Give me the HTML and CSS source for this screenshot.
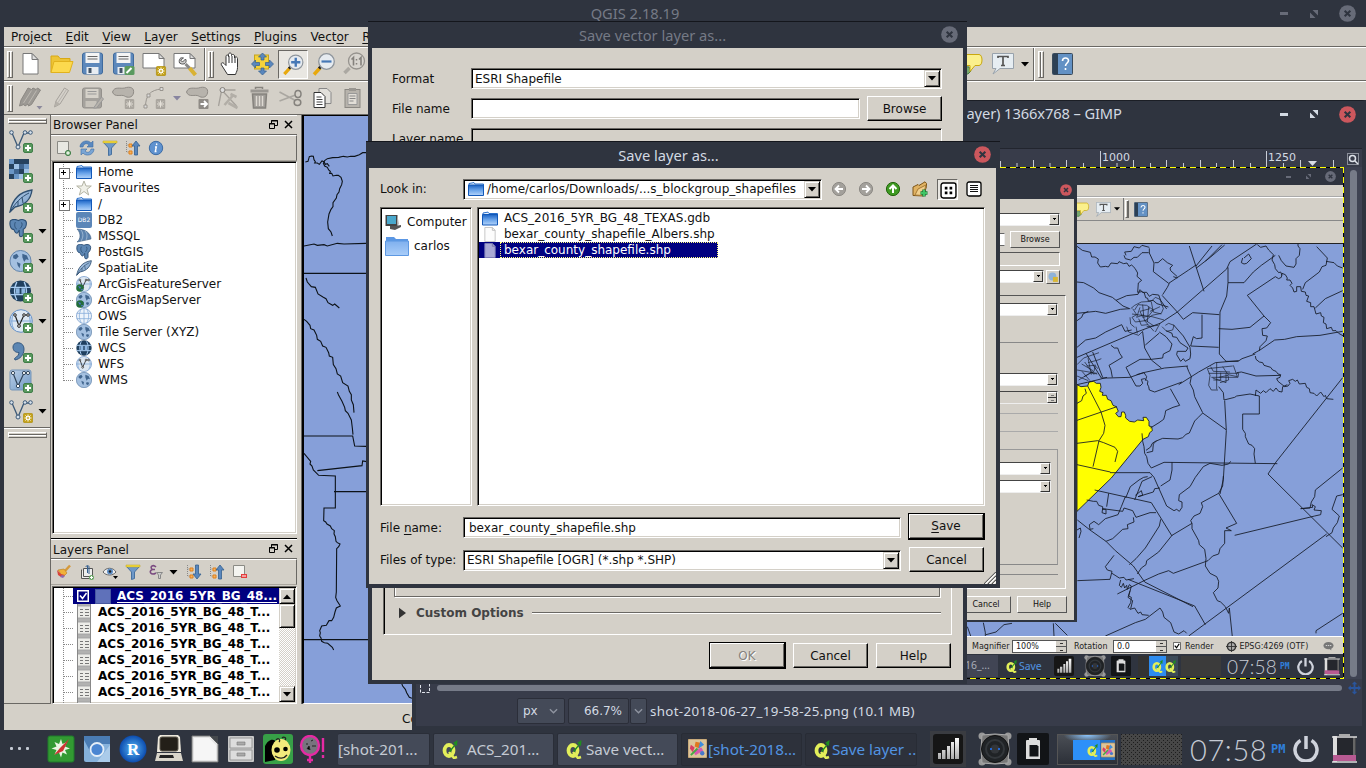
FILE: index.html
```html
<!DOCTYPE html>
<html lang="en">
<head>
<meta charset="utf-8">
<title>QGIS 2.18.19</title>
<link rel="stylesheet" href="styles.css">
</head>
<body>
<svg class="sprite" width="0" height="0">
<defs>
<linearGradient id="gFolder" x1="0" y1="0" x2="0" y2="1"><stop offset="0" stop-color="#1a62c4"/><stop offset=".5" stop-color="#6aa4ea"/><stop offset="1" stop-color="#b4d4fa"/></linearGradient>
<linearGradient id="gBlue" x1="0" y1="0" x2="1" y2="1"><stop offset="0" stop-color="#bcd0e8"/><stop offset="1" stop-color="#6d97c4"/></linearGradient>
<linearGradient id="gMetal" x1="0" y1="0" x2="0" y2="1"><stop offset="0" stop-color="#fff"/><stop offset="1" stop-color="#aaa"/></linearGradient>
<linearGradient id="gSide" x1="0" y1="0" x2="0" y2="1"><stop offset="0" stop-color="#7fb0ee"/><stop offset="1" stop-color="#a9cdf9"/></linearGradient>
<radialGradient id="gR"><stop offset="0" stop-color="#58b8f8"/><stop offset="1" stop-color="#0c4cae"/></radialGradient>
<pattern id="mesh" width="4" height="4" patternUnits="userSpaceOnUse"><rect width="4" height="4" fill="#474747"/><path d="M0 0h1v1h-1zM2 2h1v1h-1z" fill="#1d1d1d"/></pattern>
<symbol id="plus" viewBox="0 0 10 10"><rect x=".5" y=".5" width="9" height="9" rx="1.5" fill="#5a9a5f" stroke="#3f7d48"/><path d="M5 2v6M2 5h6" stroke="#fff" stroke-width="2"/></symbol>
<symbol id="sun" viewBox="0 0 10 10"><rect x=".3" y=".3" width="9.4" height="9.4" rx="1.5" fill="#c4a21a" stroke="#a88806" stroke-width=".6"/><path d="M5 1.5v7M1.5 5h7M2.5 2.5l5 5M7.500 2.500l-5 5" stroke="#fff"/><circle cx="5" cy="5" r="1.5" fill="#c4a21a" stroke="#fff"/></symbol>
<symbol id="new" viewBox="0 0 24 24"><path d="M4.500 1.500h9l6 6v14.500h-15z" fill="#fff" stroke="#777"/><path d="M13.500 1.500v6h6z" fill="#ddd" stroke="#777"/></symbol>
<symbol id="open" viewBox="0 0 24 24"><path d="M1.500 20.500v-16.500h7l2 2.500h10v4" fill="#edc436" stroke="#d8a814"/><path d="M1.500 20.500l3-11h19l-3.500 11z" fill="#fcd94e" stroke="#e1b21d"/></symbol>
<symbol id="save" viewBox="0 0 24 24"><rect x="2" y="1" width="20" height="21" rx="2" fill="#5d88bb" stroke="#3f6b9e"/><rect x="5" y="1" width="14" height="10" fill="#f4f4f4"/><path d="M7 4.500h10M7 7h10" stroke="#666"/><rect x="6" y="15" width="12" height="7" fill="#e8edf2"/><rect x="8" y="16" width="3" height="5" fill="#456"/></symbol>
<symbol id="savegrey" viewBox="0 0 24 24"><rect x="2" y="2" width="19" height="20" rx="2" fill="#a5a29d" stroke="#94918c"/><rect x="5" y="3" width="13" height="9" fill="#d6d2ca"/><path d="M7 5.500h9M7 8h9" stroke="#999"/><rect x="5" y="15" width="11" height="6" fill="#c8c4bc"/><path d="M13 22l8-11 2 2-7 9z" fill="#b7b3ac" stroke="#999"/></symbol>
<symbol id="saveas" viewBox="0 0 24 24"><use href="#save"/><rect x="13" y="14" width="10" height="9" rx="1.500" fill="#5a9a5f"/><path d="M15 21l5-5" stroke="#fff" stroke-width="2"/></symbol>
<symbol id="compnew" viewBox="0 0 24 24"><path d="M.5 1.500h16l5 5v9.500h-21z" fill="#fff" stroke="#777"/><path d="M16.500 1.500v5h5z" fill="#ddd" stroke="#777"/><use href="#sun" x="13" y="14" width="11" height="10"/></symbol>
<symbol id="compmgr" viewBox="0 0 24 24"><path d="M.5 1.500h16l5 5v9.500h-21z" fill="#fff" stroke="#777"/><path d="M16.500 1.500v5h5z" fill="#ddd" stroke="#777"/><path d="M12 12l4 4" stroke="#888" stroke-width="3"/><path d="M6 11c5 3 8-1 6-4l-3 3-2-2 3-2c-3-1-5 1-4 5z" fill="#ccc" stroke="#555"/><path d="M16 16l6 7" stroke="#d9b233" stroke-width="4"/></symbol>
<symbol id="hand" viewBox="0 0 24 24"><path d="M8 22.500l-6-9.500c-1-2 1-3 2.500-1.500l2 2v-9c0-2 2.500-2 2.500 0v-2c0-2 3-2 3 0v1c0-1.500 3-1.500 3 .5v2c0-1.500 3-1.500 3 .5v9c0 3-1 4-2 7z" fill="#fff" stroke="#333"/><path d="M9.500 4v7M12.500 4v7M15.500 5v6" stroke="#333"/></symbol>
<symbol id="pan" viewBox="0 0 24 24"><rect x="4" y="3" width="14" height="14" fill="#f4d23c" stroke="#c5a41c"/><path d="M12 1l4 4h-2.500v3h-3V5H8zM12 23l4-4h-2.500v-3h-3v3H8zM1 12l4-4v2.500h4v3H5V16zM23 12l-4-4v2.500h-4v3h4V16z" fill="#5a87bd" stroke="#34608f" stroke-width=".7"/></symbol>
<symbol id="lens" viewBox="0 0 24 24"><path d="M8.500 16l-6 6.500" stroke="#e8a90e" stroke-width="3.500"/><path d="M9.500 14.500l-2 2" stroke="#222" stroke-width="3"/><circle cx="15" cy="9.500" r="7.800" fill="#e6ebf0" stroke="#8e959c" stroke-width="1.300"/></symbol>
<symbol id="zin" viewBox="0 0 24 24"><use href="#lens"/><path d="M15 4.500v10M10 9.500h10" stroke="#4678b6" stroke-width="2.600"/></symbol>
<symbol id="zout" viewBox="0 0 24 24"><use href="#lens"/><path d="M10 9.500h10" stroke="#4678b6" stroke-width="2.200"/></symbol>
<symbol id="z11" viewBox="0 0 24 24"><path d="M7 16l-5 5" stroke="#aba8a2" stroke-width="3.500"/><circle cx="14" cy="9" r="8" fill="#d8d5cf" stroke="#96938e" stroke-width="1.300"/><path d="M9 7.500l2-2v8M16.500 7.500l2-2v8" fill="none" stroke="#84817c" stroke-width="1.600"/><path d="M14 7v1.500M14 11v1.500" stroke="#84817c" stroke-width="1.500"/></symbol>
<symbol id="pencil" viewBox="0 0 24 24"><path d="M5 21l1.500-6L15 2l4 2.500L10.500 18z" fill="#d4d0c9" stroke="#a5a19b"/><path d="M5 21l1.500-6 4 3z" fill="#b4b0a9"/><path d="M8.500 16.500l8.500-13" stroke="#b8b4ae"/></symbol>
<symbol id="pencils" viewBox="0 0 24 24"><path d="M1 20l1.500-6 7-12 3.500 1.500 1.500-1.500 3 1.500 1.500-1.500 3 2-9 14.500-3 1.500-.5-2-3 2-1-1.500z" fill="#9c9994" stroke="#8b8883"/><path d="M5 17l8-12.500M10 17.500l8-13" stroke="#bdb9b2"/><path d="M18 20h6l-3 3.500z" fill="#8d8a9c"/></symbol>
<symbol id="sung" viewBox="0 0 10 10"><rect width="10" height="10" rx="1.500" fill="#aaa69f"/><path d="M5 1.500v7M1.500 5h7M2.500 2.500l5 5M7.500 2.500l-5 5" stroke="#e4e0d8"/></symbol>
<symbol id="blob" viewBox="0 0 24 24"><path d="M1 6c2-6 8-3 12-4 6-2 10 0 9 5s-6 5-9 3-10 2-12-4z" fill="#b7b3ac" stroke="#8f8b86"/></symbol>
<symbol id="addblob" viewBox="0 0 24 24"><use href="#blob"/><use href="#sung" x="13" y="13" width="10" height="10"/></symbol>
<symbol id="mvblob" viewBox="0 0 24 24"><use href="#blob"/><rect x="13" y="13" width="10" height="10" rx="1" fill="#8f8b86"/><path d="M15 18h6M18.500 15l3 3-3 3" fill="none" stroke="#fff" stroke-width="1.800"/></symbol>
<symbol id="curve" viewBox="0 0 24 24"><path d="M3 21C3 9 8 4 19 3" fill="none" stroke="#99958f"/><path d="M1.500 19h3v3h-3zM4.500 8h3v3h-3zM17.500 1.500h3v3h-3z" fill="#ddd" stroke="#99958f"/><use href="#sung" x="13" y="13" width="10" height="10"/></symbol>
<symbol id="vertex" viewBox="0 0 24 24"><path d="M5 4h14M5 5L2 20M7 6l13 14" stroke="#a5a19b" stroke-width="1.300"/><circle cx="6" cy="4" r="2.500" fill="#ddd" stroke="#85817c"/><path d="M8 19l8-9M14 8l6 3M12 17l9 5" stroke="#b2aea7" stroke-width="2.600"/></symbol>
<symbol id="trash" viewBox="0 0 24 24"><path d="M8 3V1.500h7V3" fill="none" stroke="#88857f" stroke-width="1.500"/><path d="M3 3.500h18v3H3z" fill="#9a9792"/><path d="M5 8h14l-1 14H6z" fill="#a09d98" stroke="#85827d" stroke-width="1.500"/><path d="M9 10v10M12 10v10M15 10v10" stroke="#dedad3" stroke-width="1.500"/></symbol>
<symbol id="cut" viewBox="0 0 24 24"><path d="M1 6l15 8M1 15l16-6" stroke="#aaa7a1" stroke-width="1.600"/><ellipse cx="19.500" cy="8" rx="3" ry="3.500" fill="none" stroke="#85827d" stroke-width="1.500"/><ellipse cx="19" cy="16.500" rx="3.300" ry="3" fill="none" stroke="#85827d" stroke-width="1.500"/></symbol>
<symbol id="copy" viewBox="0 0 24 24"><path d="M9.500 2.500h8l4 4v11h-12z" fill="#e2e0db" stroke="#888"/><path d="M4.500 6.500h7l4 4v11h-11z" fill="#fff" stroke="#333"/><path d="M7 11h5M7 13.500h6M7 16h6M7 18.500h6" stroke="#444"/></symbol>
<symbol id="paste" viewBox="0 0 24 24"><rect x="4.500" y="3.500" width="15" height="18" fill="#b7b3ac" stroke="#8a8782"/><path d="M8.500 2h7v3h-7z" fill="#9a9792"/><path d="M7.500 7.500h9l0 11h-9z" fill="#e2ded7" stroke="#999"/><path d="M9 10h6M9 12.500h6M9 15h4" stroke="#888"/></symbol>
<symbol id="vee" viewBox="0 0 24 24"><path d="M3 4l6 14 6-14h6" fill="none" stroke="#3d5a78" stroke-width="1.300"/><g fill="#d8e2ec" stroke="#3d5a78"><circle cx="2.500" cy="3.500" r="1.800"/><circle cx="9" cy="18" r="2"/><circle cx="16" cy="3.500" r="1.800"/><circle cx="21.500" cy="3.500" r="1.800"/></g></symbol>
<symbol id="raster" viewBox="0 0 24 24"><path d="M0 0h20v20H0z" fill="#6a96c6"/><path d="M5 0h5v5H5zM15 0h5v5h-5zM0 5h5v5H0zM10 10h5v5h-5zM0 15h5v5H0zM10 0h5v5h-5z" fill="#26425f"/><path d="M5 5h5v5H5zM15 10h5v5h-5zM10 15h5v5h-5z" fill="#9fc2e6"/><path d="M5 10h5v5H5zM10 5h5v5h-5z" fill="#3f6590"/></symbol>
<symbol id="feather" viewBox="0 0 24 24"><path d="M1 23C3 12 9 3 23 1c-1 8-6 15-17 17z" fill="url(#gBlue)" stroke="#2f4f70" stroke-width="1.300"/><path d="M1 23C6 14 12 8 20 4M9 12l0 5M13 8l1 6" fill="none" stroke="#2f4f70"/></symbol>
<symbol id="eleph" viewBox="0 0 24 24"><path d="M2 2c4-3 8-1 10 0 3-2 10-2 10 3 0 4-2 7-4 8v7c-1 3-5 3-5 0v-6c-1 2-2 4-3 4-3 0-3-4-4-5-4 1-6-7-4-11z" fill="#5c86b3" stroke="#2c4f75" stroke-width="1.400"/><path d="M8 4c-2 4 0 8 2 9M15 4c3 2 1 6-1 8" fill="none" stroke="#2c4f75" stroke-width="1.200"/></symbol>
<symbol id="wms" viewBox="0 0 24 24"><circle cx="12" cy="12" r="11.500" fill="#a4c0e0" stroke="#5c7fa6"/><path d="M4 6l4-2 2 3-3 3-3-1zM8 13l4 2-1 5-2-3zM14 4l5 2 2 5-3-1-2 3-2-5zM16 15l4 1-2 4-3-2z" fill="#41658e"/></symbol>
<symbol id="wcs" viewBox="0 0 24 24"><circle cx="12" cy="12" r="11.500" fill="#20405f"/><path d="M8 2C5 8 5 16 8 22M16 2c3 6 3 14 0 20M1 8h22M1 16h22" fill="none" stroke="#a9cdf2" stroke-width="1.500"/><path d="M7 9h4v6H7zM13 9h4v6h-4z" fill="#8db6e0"/></symbol>
<symbol id="ows" viewBox="0 0 24 24"><circle cx="12" cy="12" r="11.300" fill="#eef4fb" stroke="#6590c6"/><path d="M8 1.500C4 8 4 16 8 22M16 1.500c4 6.500 4 14.500 0 21M1 8h22M1 16h22M12 1v22" fill="none" stroke="#87addb" stroke-width="1.200"/></symbol>
<symbol id="wfs" viewBox="0 0 24 24"><circle cx="12" cy="12" r="11.300" fill="#dde7f2" stroke="#6590c6"/><path d="M1 12h22M5 4c-3 5-3 12 0 16M19 4c3 5 3 12 0 16" fill="none" stroke="#87addb" stroke-width="1.200"/><path d="M6 6l4 11 5-11h4" fill="none" stroke="#222" stroke-width="1.200"/><g fill="#ddd" stroke="#333"><circle cx="6" cy="6" r="1.300"/><circle cx="10" cy="17" r="1.400"/><circle cx="15" cy="6" r="1.300"/><circle cx="19" cy="6" r="1.300"/></g></symbol>
<symbol id="comma" viewBox="0 0 24 24"><path d="M4 6c0-6 11-6 11 2 0 6-4 10-9 11l-.5-1.500c3-2 4.500-4 4.500-6-4 0-6-2-6-5.500z" fill="#5c86b3" stroke="#35587f"/></symbol>
<symbol id="virt" viewBox="0 0 24 24"><rect x="1" y="1" width="21" height="20" rx="2" fill="url(#gBlue)" stroke="#7796b8"/><path d="M4 4l5 13 6-13h4" fill="none" stroke="#33475c" stroke-width="1.200"/><g fill="#fff" stroke="#33475c"><circle cx="4" cy="4" r="1.600"/><circle cx="9" cy="17" r="1.700"/><circle cx="15" cy="4" r="1.600"/><circle cx="19" cy="4" r="1.600"/></g></symbol>
<symbol id="folder" viewBox="0 0 16 14"><path d="M1 3V1.500L6 .6l1 1.400h8.500V4" fill="#e8f2fd" stroke="#2a70cc"/><path d="M.5 3h15v10.500H.5z" fill="url(#gFolder)" stroke="#1258b8"/></symbol>
<symbol id="star" viewBox="0 0 16 16"><path d="M8 1l2 5h5.300l-4.300 3.300L12.700 15 8 11.500 3.300 15 5 9.300.7 6H6z" fill="#f0f0e8" stroke="#b4b4a4"/></symbol>
<symbol id="mssql" viewBox="0 0 16 16"><path d="M1 1c8 0 14 4 14 10L1 14c4-3 4-9 0-13z" fill="#5b82ae" stroke="#3c5c80" stroke-width=".6"/><path d="M5 2c3 4 2 8 0 11M9 3c3 3 2 7 1 9" fill="none" stroke="#c6d6e8" stroke-width=".6"/></symbol>
<symbol id="gbadge" viewBox="0 0 8 8"><circle cx="4" cy="4" r="3.800" fill="#226d3a"/><path d="M2 2l3 1-1 2zM5 5l2 0-1 2z" fill="#4d6fd0"/></symbol>
<symbol id="refresh" viewBox="0 0 16 16"><path d="M1 7C1 1 9-1 12 3l2-2v6H8l2-2C8 3 5 3 4 7z" fill="#5a89c0" stroke="#3d6ca5" stroke-width=".6"/><path d="M15 9c0 6-8 8-11 4l-2 2V9h6l-2 2c2 2 5 2 6-2z" fill="#7aa5d4" stroke="#3d6ca5" stroke-width=".6"/></symbol>
<symbol id="funnel" viewBox="0 0 16 16"><path d="M1.500 2.500h13L9.500 8v6.500l-3 1V8z" fill="#6e98c8" stroke="#47719f"/><path d="M1 1h14v2H1z" fill="#f4dc3e" stroke="#bfa31d" stroke-width=".5"/></symbol>
<symbol id="up" viewBox="0 0 16 16"><path d="M1.500 1v11h4M1.500 5h4" fill="none" stroke="#888" stroke-dasharray="1 1"/><path d="M4 4h3v3H4zM4 11h3v3H4z" fill="#f6b25e" stroke="#e0801a"/><path d="M11 1l4 5h-2.500v9h-3V6H7z" fill="#5a87bd" stroke="#34608f" stroke-width=".8"/></symbol>
<symbol id="down" viewBox="0 0 16 16"><path d="M1.500 1v11h4M1.500 5h4" fill="none" stroke="#888" stroke-dasharray="1 1"/><path d="M4 4h3v3H4zM4 11h3v3H4z" fill="#f6b25e" stroke="#e0801a"/><path d="M11 15l4-5h-2.500V1h-3v9H7z" fill="#5a87bd" stroke="#34608f" stroke-width=".8"/></symbol>
<symbol id="info" viewBox="0 0 16 16"><circle cx="8" cy="8" r="6.700" fill="#5f92cf" stroke="#3d6ca5"/><path d="M8.800 3.500l-.3 1.600M7 7h1.300l-1 4.500h1.200" stroke="#fff" stroke-width="1.400" fill="none"/></symbol>
<symbol id="addbox" viewBox="0 0 16 16"><path d="M1.500 1.500h11v12h-11z" fill="#e8e8e2" stroke="#8a8a84"/><circle cx="12" cy="13" r="2.600" fill="#8fbf8a" stroke="#3f7d48"/><path d="M12 11.500v3M10.500 13h3" stroke="#fff"/></symbol>
<symbol id="delbox" viewBox="0 0 16 16"><path d="M1.500 1.500h11v11h-11z" fill="#f4f4f0" stroke="#8a8a84"/><path d="M9 10h6v4H9z" fill="#e53c3c"/><path d="M10 12h4" stroke="#fff"/></symbol>
<symbol id="brush" viewBox="0 0 16 16"><path d="M9 7l5-5.500" stroke="#d59a3c" stroke-width="2.500"/><path d="M2 6l6-1 3 4-4 4z" fill="#f0b23a" stroke="#bb7a1b" stroke-width=".6"/><path d="M1 6l4 4 4 1-4 2-3-2z" fill="#d8443a"/><path d="M4 13l2-2 3 1-2 2z" fill="#8c6cb0"/></symbol>
<symbol id="grp" viewBox="0 0 16 16"><path d="M2.500 5.500v9h8M4.500 4.500v8h9v-8z" fill="#eee" stroke="#555"/><path d="M8.500 2v7M7 3c0-2 3-2 3 0v7" fill="none" stroke="#345f8f"/><circle cx="12.500" cy="13.500" r="2.500" fill="#6aa766"/><path d="M12.500 12v3M11 13.500h3" stroke="#fff"/></symbol>
<symbol id="eye" viewBox="0 0 16 16"><path d="M1 8c3-5 10-5 13 0-3 4-10 4-13 0z" fill="#eee" stroke="#666"/><circle cx="8" cy="7.500" r="3" fill="#5d8fc8"/><circle cx="8" cy="7.500" r="1.300" fill="#222"/><path d="M11 12h5l-2.500 3z" fill="#000"/></symbol>
<symbol id="eps" viewBox="0 0 16 16"><path d="M8 3C5 0 1 3 4.500 5.500 0 7 3 12 8 9M4 5.500h3" fill="none" stroke="#7a4a80" stroke-width="1.500"/><path d="M8.500 8.500h6l-2 2.500v3.500h-2V11z" fill="#ccc" stroke="#888"/></symbol>
<symbol id="table" viewBox="0 0 14 16"><path d="M.5 0h13v16H.5z" fill="#ecece8" stroke="#888"/><path d="M1 1.500h12M1 14.500h12" stroke="#aaa" stroke-width="2"/><path d="M3 5.500h3M8 5.500h4M3 8.500h3M8 8.500h4M3 11.500h3M8 11.500h4" stroke="#777"/></symbol>
<symbol id="float" viewBox="0 0 9 9"><path d="M2.500 3V.5h6v5H6M2 1h7M.5 3.500h5v5h-5zM0 4h6" fill="none" stroke="#000"/></symbol>
<symbol id="x" viewBox="0 0 9 9"><path d="M1 1l7 7M8 1L1 8" stroke="#000" stroke-width="1.500"/></symbol>
<symbol id="close" viewBox="0 0 18 18"><circle cx="9" cy="9" r="8.800" fill="#cc575d"/><path d="M6 6l6 6M12 6l-6 6" stroke="#2f343f" stroke-width="2.200"/></symbol>
<symbol id="closeoff" viewBox="0 0 18 18"><circle cx="9" cy="9" r="8.800" fill="#676b78"/><path d="M6 6l6 6M12 6l-6 6" stroke="#2f343f" stroke-width="2.200"/></symbol>
<symbol id="max" viewBox="0 0 8 8"><path d="M2.500 0H8v5.500zM0 2.500V8h5.500z"/></symbol>
<symbol id="tri" viewBox="0 0 8 5"><path d="M0 0h8L4 4.500z"/></symbol>
<symbol id="help" viewBox="0 0 21 22"><rect x=".5" y=".5" width="20" height="21" rx="1" fill="#6391c4" stroke="#3a4a5a"/><path d="M1 1h5v20H1z" fill="#2c4055"/><path d="M10.500 8c0-4 6-4 6-.5 0 2.500-3 2.500-3 5.500M13.500 15v2" fill="none" stroke="#fff" stroke-width="1.600"/></symbol>
<symbol id="tip" viewBox="0 0 26 22"><path d="M7 21c-3-5 0-8 5-7l2 4-3 3z" fill="#78a870" stroke="#447a44"/><path d="M3 1.500h19c4 0 4 11 0 11h-4l-5 6v-6H3z" fill="#fbf08c" stroke="#c9a70e"/></symbol>
<symbol id="ttip" viewBox="0 0 22 22"><path d="M.5.500h21v15H8L1 21l3-5.500H.500z" fill="#e6edf2" stroke="#98a2ac"/><path d="M6 5V3.500h10V5M11 3.500v9M9 12.500h4" fill="none" stroke="#555" stroke-width="1.700"/></symbol>
<symbol id="q" viewBox="0 0 16 20"><ellipse cx="7" cy="11.500" rx="4.500" ry="5.500" fill="none" stroke="#e2ef5a" stroke-width="3.800"/><path d="M7 13l5 6 3-1" stroke="#e2ef5a" stroke-width="2.600" fill="none"/><path d="M7 12l6-7-2-1 4.500-3-.5 6-1.500-1-5 7z" fill="#1f8f1f"/></symbol>
<symbol id="bars" viewBox="0 0 30 30"><rect width="30" height="30" rx="3" fill="#161616"/><path d="M5 19h3v6H5zM9 16h3.500v9H9zM14 12h3v13h-3zM18 8h3v17h-3zM22 4h4v21h-4z" fill="url(#gMetal)"/></symbol>
<symbol id="spk" viewBox="0 0 34 34"><g fill="#999"><circle cx="4" cy="4" r="3.500"/><circle cx="30" cy="4" r="3.500"/><circle cx="4" cy="30" r="3.500"/><circle cx="30" cy="30" r="3.500"/></g><path d="M4 3q13-2 26 0 2 14 0 28-13 2-26 0-2-14 0-28z" fill="#777" stroke="#aaa"/><circle cx="17" cy="17" r="13.500" fill="#202326" stroke="#111"/><circle cx="17" cy="17" r="9" fill="none" stroke="#33373b" stroke-width="2"/><circle cx="17" cy="17" r="4.500" fill="#33363a"/><path d="M12 17h2M20 17h2" stroke="#27f" stroke-width="1.500"/></symbol>
<symbol id="clip" viewBox="0 0 32 32"><rect width="32" height="32" rx="2" fill="#121417"/><path d="M9 8q0-1 1-1h2V5h8v2h2q1 0 1 1v18H9z" fill="#ddd"/><path d="M12.500 12h7.500l1.500 1.500v10h-9z" fill="#121417"/></symbol>
<symbol id="pow" viewBox="0 0 26 26"><path d="M7.500 4.500a11 11 0 1 0 11 0" fill="none" stroke="#cfd3dc" stroke-width="3.500"/><path d="M13 0v13" stroke="#cfd3dc" stroke-width="3.500"/></symbol>
<symbol id="bat" viewBox="0 0 27 30"><path d="M8 0h11v3H8z" fill="#aaa"/><rect x="2" y="2" width="23" height="26" rx="1" fill="#25272d"/><path d="M2 2h4v26H2z" fill="#ddd"/><path d="M2 21h23v6H2z" fill="#b85a92"/><path d="M22 3h2.500v18H22z" fill="#666"/><path d="M1 28h25M1 3h25" stroke="#ddd" stroke-width="1.600"/></symbol>
<symbol id="gimp" viewBox="0 0 20 20"><rect width="20" height="20" rx="1" fill="#dcc59a" stroke="#b08c58"/><path d="M8 3l5 1-1 6-5-2z" fill="#e07820"/><path d="M13 2l4 4-6 4z" fill="#3f8ede"/><path d="M3 6l4 3-2 5-3-4z" fill="#d83e64"/><path d="M5 13l9-4 2 3-8 5z" fill="#d958b0"/><circle cx="15" cy="15" r="2.300" fill="#4878cc"/><path d="M3 17l7-7" stroke="#4a4" stroke-width="2"/></symbol>
</defs>
</svg>

<main class="desktop">

<section class="win qgis">
 <header class="title dim"><span class="cap">QGIS 2.18.19</span><span class="wb"><i class="min"></i><svg class="mx"><use href="#max"/></svg><svg class="cl"><use href="#closeoff"/></svg></span></header>
 <nav class="menu"><span>Pro<u>j</u>ect</span><span><u>E</u>dit</span><span><u>V</u>iew</span><span><u>L</u>ayer</span><span><u>S</u>ettings</span><span><u>P</u>lugins</span><span>Vect<u>o</u>r</span><span><u>R</u>aster</span></nav>
 <div class="tb">
  <i class="grip"></i>
  <svg><use href="#new"/></svg><svg><use href="#open"/></svg><svg><use href="#save"/></svg><svg><use href="#saveas"/></svg><svg><use href="#compnew"/></svg><svg><use href="#compmgr"/></svg>
  <i class="sep"></i><i class="grip"></i>
  <svg><use href="#hand"/></svg><svg><use href="#pan"/></svg><svg class="on"><use href="#zin"/></svg><svg><use href="#zout"/></svg><svg><use href="#z11"/></svg>
  <span class="tbr"><svg class="tipi"><use href="#tip"/></svg><svg class="ttipi"><use href="#ttip"/></svg><svg class="ar"><use href="#tri"/></svg><i class="sep"></i><i class="grip"></i><svg class="helpi"><use href="#help"/></svg></span>
 </div>
 <div class="tb">
  <i class="grip"></i>
  <svg><use href="#pencils"/></svg><svg><use href="#pencil"/></svg><svg><use href="#savegrey"/></svg><svg><use href="#addblob"/></svg><svg><use href="#curve"/></svg><svg class="ar grey"><use href="#tri"/></svg><svg><use href="#mvblob"/></svg><svg><use href="#vertex"/></svg><svg><use href="#trash"/></svg><svg><use href="#cut"/></svg><svg><use href="#copy"/></svg><svg><use href="#paste"/></svg>
 </div>
 <div class="work">
  <aside class="ltb">
   <i class="hgrip"></i>
   <div class="li"><svg viewBox="0 0 24 24"><use href="#vee"/><use href="#plus" x="14" y="14" width="10" height="10"/></svg></div>
   <div class="li"><svg viewBox="0 0 24 24"><use href="#raster"/><use href="#plus" x="14" y="14" width="10" height="10"/></svg></div>
   <div class="li"><svg viewBox="0 0 24 24"><use href="#feather"/><use href="#plus" x="14" y="14" width="10" height="10"/></svg></div>
   <div class="li"><svg viewBox="0 0 24 24"><use href="#eleph" width="19" height="19"/><use href="#plus" x="14" y="14" width="10" height="10"/></svg><svg class="ar"><use href="#tri"/></svg></div>
   <div class="li"><svg viewBox="0 0 24 24"><use href="#wms" y="1" width="23" height="22"/><use href="#plus" x="14" y="14" width="10" height="10"/></svg><svg class="ar"><use href="#tri"/></svg></div>
   <div class="li"><svg viewBox="0 0 24 24"><use href="#wcs" y="1" width="23" height="22"/><use href="#plus" x="14" y="14" width="10" height="10"/></svg></div>
   <div class="li"><svg viewBox="0 0 24 24"><use href="#wfs"/><use href="#plus" x="14" y="14" width="10" height="10"/></svg><svg class="ar"><use href="#tri"/></svg></div>
   <div class="li"><svg viewBox="0 0 24 24"><use href="#comma" y="2"/><use href="#plus" x="14" y="14" width="10" height="10"/></svg></div>
   <div class="li"><svg viewBox="0 0 24 24"><use href="#virt"/><use href="#plus" x="14" y="14" width="10" height="10"/></svg></div>
   <div class="li"><svg viewBox="0 0 24 24"><use href="#vee"/><use href="#sun" x="14" y="14" width="10" height="10"/></svg><svg class="ar"><use href="#tri"/></svg></div>
   <i class="hline"></i><i class="hgrip"></i>
  </aside>
  <div class="docks">
   <section class="dock browser">
    <h2>Browser Panel<span><svg><use href="#float"/></svg><svg><use href="#x"/></svg></span></h2>
    <div class="dtb"><svg><use href="#addbox"/></svg><svg><use href="#refresh"/></svg><svg><use href="#funnel"/></svg><svg><use href="#up"/></svg><svg><use href="#info"/></svg></div>
    <ul class="tree sunk">
     <li class="ex"><svg><use href="#folder"/></svg>Home</li>
     <li><svg><use href="#star"/></svg>Favourites</li>
     <li class="ex"><svg><use href="#folder"/></svg>/</li>
     <li><span class="db2">DB2</span>DB2</li>
     <li><svg><use href="#mssql"/></svg>MSSQL</li>
     <li><svg><use href="#eleph"/></svg>PostGIS</li>
     <li><svg><use href="#feather"/></svg>SpatiaLite</li>
     <li><svg viewBox="0 0 16 16"><use href="#wfs"/><use href="#gbadge" y="8" width="8" height="8"/></svg>ArcGisFeatureServer</li>
     <li><svg viewBox="0 0 16 16"><use href="#wms"/><use href="#gbadge" y="8" width="8" height="8"/></svg>ArcGisMapServer</li>
     <li><svg><use href="#ows"/></svg>OWS</li>
     <li><svg><use href="#wms"/></svg>Tile Server (XYZ)</li>
     <li><svg><use href="#wcs"/></svg>WCS</li>
     <li><svg><use href="#wfs"/></svg>WFS</li>
     <li class="last"><svg><use href="#wms"/></svg>WMS</li>
    </ul>
   </section>
   <section class="dock layers">
    <h2>Layers Panel<span><svg><use href="#float"/></svg><svg><use href="#x"/></svg></span></h2>
    <div class="dtb"><svg><use href="#brush"/></svg><svg><use href="#grp"/></svg><svg><use href="#eye"/></svg><svg><use href="#funnel"/></svg><svg><use href="#eps"/></svg><svg class="ar"><use href="#tri"/></svg><svg><use href="#down"/></svg><svg><use href="#up"/></svg><svg><use href="#delbox"/></svg></div>
    <div class="ltree sunk">
     <ul class="tree bold">
      <li class="sel"><div><svg class="chk" viewBox="0 0 12 12"><path d="M.75.750h10.500v10.500H.750zM3 5.500l2.500 3L9.500 3" fill="none" stroke="#fff" stroke-width="1.500"/></svg><i class="sw"></i><u>ACS_2016_5YR_BG_48...</u></div></li>
      <li><svg class="t"><use href="#table"/></svg>ACS_2016_5YR_BG_48_T...</li>
      <li><svg class="t"><use href="#table"/></svg>ACS_2016_5YR_BG_48_T...</li>
      <li><svg class="t"><use href="#table"/></svg>ACS_2016_5YR_BG_48_T...</li>
      <li><svg class="t"><use href="#table"/></svg>ACS_2016_5YR_BG_48_T...</li>
      <li><svg class="t"><use href="#table"/></svg>ACS_2016_5YR_BG_48_T...</li>
      <li><svg class="t"><use href="#table"/></svg>ACS_2016_5YR_BG_48_T...</li>
      <li><svg class="t"><use href="#table"/></svg></li>
     </ul>
     <div class="sb"><b class="btn"><svg class="flip"><use href="#tri"/></svg></b><b class="btn thumb"></b><b class="btn end"><svg><use href="#tri"/></svg></b></div>
    </div>
   </section>
  </div>
  <div class="canvas">
   <svg viewBox="912 348 324 1764" width="108" height="588" fill="none" stroke="#0c1218" stroke-width="3.300">
    <path d="M916 486l8-2 4-14 6-2 6 1 2 10 4 6-2 4 8 0 6 4 8-10 6 2 4 8 6-2 6 8M1098 458l-10 0-10 6-14 5-12 0-10 2-12-2-14 3-18 1-16 3-8 6-4 8 4 8 8 4 4 8 5 4-2 6 6 0 4 8 10-2 6 0 8 6 4 12-2 10-6 12-2 10-6 8-2 10-10 14 0 12-6 8-6 14-4 24 2 20 8 10 4 12"/>
    <path d="M912 738l30-6 10 4 20-2 10 4 30-8 20 2 66-2M912 820h186M918 834l4 12 12 14 12 2 8 20 16 10 8 4 6 12 14 8 6-4 14 12M912 958l8 6 10 12 2 10 10 4 8 16 2 12 10 6 6 14 10 4 8 16 2 10 10 4 2 22 8 12 4 16 10 6 6 20 16 10 4 16 6 10 0 16 6 14 2 24M1012 1176l4 10 10 18 8 18 2 10 8 8 10 20 3 24 2 20M912 1308h146l6 30 34 1M912 1360l20 24-2 8 6 6 4 12 16 16 50 2v96h-34l-1 38 6 4 4 6 10 6 4 8 8 6-1 10 4 8 2 14 4 4 8 4-4 8-6 6-1 130-2 16 4 10 10 16-12 6-4 12-4 16-6 10-8 0-8 14-14 2-6 14 2 6-2 10 4 6 2 10 8 4 10 2 14 12 4 8M952 1412l134-15 2-14 12 2M1002 1475h98M912 1919h324M1204 2048l4 10 8 10 4 10 8 14 8 3"/>
   </svg>
  </div>
 </div>
 <footer class="qstat">Coordinate</footer>
</section>

<section class="win gimp">
 <header class="title gt"><span class="gcap">ayer) 1366x768 – GIMP</span><span class="wb"><i class="min"></i><svg class="mx"><use href="#max"/></svg><svg class="cl"><use href="#close"/></svg></span></header>
 <div class="grule"><svg width="384" height="18" viewBox="0 0 384 18"><path d="M140.500 2v16M306.500 2v16" stroke="#c8ccd6"/><path d="M40.500 12v6M57 14v4M73.500 11v7M90 14v4M106.500 11v7M123.500 14v4M157 14v4M173.500 11v7M190.500 14v4M206.500 11v7M223.500 14v4M240.500 11v7M256.500 14v4M273.500 11v7M290.500 14v4M323.500 14v4M340.500 11v7M373.500 11v7" stroke="#c8ccd6"/><path d="M348 12h9l-4.500 5z" fill="#d8dce4"/><text x="142" y="12">1000</text><text x="308" y="12">1250</text></svg><svg class="zq" viewBox="0 0 12 12"><rect x=".5" y=".5" width="11" height="11" fill="none" stroke="#dfe3ea" stroke-dasharray="1 1"/><circle cx="5.500" cy="5.500" r="3" fill="none" stroke="#dfe3ea" stroke-width="1.500"/><path d="M8 8l3 3" stroke="#dfe3ea" stroke-width="1.500"/></svg></div>
 <div class="gmain">
  <div class="shot">
   <div class="s-title"><i class="min"></i><svg class="mx"><use href="#max"/></svg><svg class="cl"><use href="#closeoff"/></svg></div>
   <div class="s-menu"></div>
   <div class="s-tb"><svg class="a"><use href="#tip"/></svg><svg class="b"><use href="#ttip"/></svg><svg class="c"><use href="#tri"/></svg><i class="sep"></i><i class="grip"></i><svg class="d"><use href="#help"/></svg></div>
   <div class="s-gap"></div>
   <svg class="s-map" viewBox="0 42 1149 1176" width="383" height="392" fill="none" stroke="#151b26" stroke-width="2.600">
    <path d="M351 464l12 6 20-2 4-12 14-2 8 6 12 0 2 12-4 12 10 4-2 8 12 0 4 12 10 4 6 14 10 4 6 14-8 6 8 10 8 0 2-14 8 0 4 10 0 8 12 10 14 2 10-6 18 2-2-10 10 0 8 12 0 14 8 2 2 12-8 6-4 12-16 8-95 116L351 844z" fill="#ff0"/>
    <path d="M383 468l40 78 12 40-4 24-14 22-18 78M351 571l120-41M351 640l62-8 18 6 34 14 8 12-8 32M351 704l100 22M351 520l14-8 4-14 10-8-4-14"/>
    <path d="M351 49l16 12 24 6 4 14 10 0 10 6-2 12 8 12 16-2 8 2 8-12 20 2 4-6 14 6 10-2 6 10 8-4 10 10 8 14-2 10 14 12-10 8-2 28 12-2 8 4 4 14 6 2 2 8 14-2 12 10 20 6 14 4M498 76l-4-10 20-2 8-14 16 4 8-8 22 6M492 76l4 10 16 4 10-8 10 0 14-14 20 0M568 55l0 14 14 30-2 26 46 35 60-40 22-15M640 140l12 4M628 160l-6 12-14 22M584 98l10 0 14-12 14 12 16 8-8 8 2 8 20 18M688 48l44 136M652 246l148-129 10-22 80-53M804 112l0 46-4 40-20 48-2 126 20 22M708 115l44-34 42-36M736 94l50-50M708 108l48-60M606 196l46 50 18 22 28-20 80 6M726 254v70l-16 2-10-6-8 28 84 4M652 246l-52 34-80 30-169 72M351 352l26-22 30-6 30-18 48-22 10 20 20-4M351 156l20 2 30 16 16 14 40 14 32 26 20 8-28 2-44 12-30-6-56 6M351 272l14-10 4-10 16-8M468 211l32-14 34-4 6-14 8 8 12 0 8 12 10-6 18 2 6 16 18 26M548 306l6 48 20 36 30 24M556 345l42-36M640 284l30 34 20 34 2 20-2 14-14 8-6-8-8 8-12-20 2-10 26 0 6-10-24-16-10-16-12-2-2-10-18-8M574 388l34-4 2-12 20-10 6-20-18-22-20-14M453 346l10 8 10 0 6 16 8 12-40 24 6 14 4 22M378 370l46 74 20 0 66-2 40-14 64-14 70-6M398 366l30 76M574 388l-34 0-42 24 10 20 20 36 12 0 8-8-4-12 10-2 10 8-2 8 4 8 2 10 16 6 82-30M556 452l4-12-8-12-22 6M351 464l60-14 30-8M680 408l6 16 8 16-4 20 10 20 4 20 24 48M656 464l60-38 50-28 70-6M631 476l28 50-20 6-22 10-2 12-4 14-14 10-26 16M728 549l-14 14-10 10-16 36-10 4-10 10-14 4-46-2-24 10-8 6-4 10-14 10M728 549l70 50M796 394h38l12-8 40-14M830 428l14-2 44 12 74-2M830 498l-6 4-32 8-2-22-14-18M830 498l40-6 28 6v54h-50v46l8 12 0 10 10 22 10 4 8 10-2 16 4 28M794 512l5 90-9 146-10 44M546 610l2 24 4 16 2 20 6 10 4 20 10 14 38-17 340 4M560 668l18-4 2-22 10-10M776 296l40 2 54-6 42-34M804 158h48l28-32 24-20 42-30M892 44l10 8 16-4 8 12 14 14-4 16 8 14 2 12 10 12 6-2 4 10M848 84l-4 14 8 4 8-2 14-14-8-14-14 12M946 140l-84 56 50 62 20 20-12 16-14 2 2 20 14 2-4 14-18 18-2 12M878 372l22-12 44-30 30-2 36-8 70-4 68-12M956 76l8 16 14 16 24 4 6-10 0-16 10-10 2-20-6-8 0-6M1070 50l32 34-4 22-12 4-8 16-42 32-8 20M1098 94l24 4 10 10 16 6M1066 234l30-28 52-24"/>
    <path d="M946 140l10 6 8-4 2-12 10 4 6 10-2 6 10 0 6 10-6 6 8 8 4 12 8-2 0-14 12 0 2 14 12 2 2 10 8 2-6 16 12 4 0 12 10 0 6 22 14-4 2 10 8 4-2 16 8 4 2 14 14-4 4 10 10 0 8 8 18 10 4 16 2 12M886 378l2 10 10 8 10 2 4 8 20 6 6 8 10 4 6 8 8 2-2 8-10 4 4 8 20 16 10-2 6-8-4-8 12-4 8 6 6-4 6 12 18-2 4 12 8 4 2 12 12 2 8 8 12-12 10 14 4-4 4 10 20 2M982 464l-14 6-2 16-10-2-8-10-8 10-10-8-12 12-8-6-8 8-14-10-2 18"/>
    <path d="M1148 443l-200 253-24 36 224 222M1148 714l-82 66-2 20-10 16-4 18-28 2 36-4-2-8 10 6-4 10 22 2-2 12-18 4-240 58M1148 794l-18 4-14 40 22 20-6 20-12 16-4 14-18 12M1100 912L686 1218M736 1184l-32-56-200-80M790 738l-2 30-12 22 54 90-32 14 16 8-20 0 0 38-14 16-4 16-18 6-14 14-104 38-14-8-30 10-44 20-80 40M776 790l-52 28 4 12-8 20-18 8-10 14 4 8 0 16 20 36 2 12 16 14 4 28-2 22 14 22 20 10 6 14-2 20-14 14 12 24 10 4 14 14 10 20 2-16 10 96M696 880l-60 36-40 50-36 26-2 12-14 10-12 18M602 868l-4 20-42 66-28 32-20 18M352 870l38 30 48 34 28 28 54 46 34 48 145 74M462 976l-26 34 6 10 14 4-6 24-98 4M456 1030l22 14 14-2 6 8 24-4M482 1050l-4 16 6 6 6-12 4 14 6-8 2 12 6-14 6 4-4 16-4 14 8 4-2 16-8 14 6 6 14-4 10 16 8-4 4 8 20 2M510 1082l-6 20 14 10-6 24M436 1218l90-40 30-10 44-34 8 12 4 16 20 16 10 28 14 6 16-10 8 8M438 934l20-8 30-28 16-2-2-12 20-8-2-14M404 780l170 38 62 100M380 810l20 4 10 0 6 12 12 4 0 8 10 0 0 14-12-4 2-12 60 8 4-10 26 8 10 20 42-14 18 0M496 800l-12 30-10 24-38 12-20 18-14-10-14 10 2 14 10-2M446 790l-6 40M450 728l120 0 12 14 38 86 22 14 8-4 8 6 8-12 0-16-10-4 2-18 32-24 16-28 24-32 20-10 36 6 20-4 6-8M497 804l14-34 26-20 14-8 12-2M524 810l22-56 30-14M526 796l18-14 4 14-14 4 46-14 4-10 16-2M602 768l28-18 6-30 0-24M351 900l10-6 2 10-6 20M1068 1210l0-8 80-52M22 1190l10 28M70 1178l6 30 0 10M78 1214l30-8 24-22 24-4M280 1180l2 38M286 1180l36 36"/>
    <path stroke-width="2" d="M524 240l10-16 26 2 20 14-14 18-18 4-8-18 30-8M548 224l4 44 30 20M516 252l60 8 36 10M566 230l-4 46M600 280l-14 26M536 266l8 20 20-2M512 236l12-10 20-10 30-2 12-12 14 6 10 28-6 14-28 6-20 16-30 4-10-14 14-8-12-18M510 262l2 20 12 10M500 290l6 16 30 10 14-14M528 290l4 20M552 270l30 34M560 290l34-4M574 216l6 30 24 6M570 244l30-14M606 290l14 14 18-4 4-14-16-6-10 6M540 232l-10 30 22-8M742 416l76-8M746 430l90 0-2 12-80 0M770 398v80M782 428l0 22-22 0M798 430v28l-40-14M742 416l8 20-4 30 8 14 20 0M776 442l28-6 2 14-26 8M788 410l16 24 28 6-12-34M752 410l8 14 50 2M365 402l34 20M372 440l30-16 4-20M351 420l60 10M384 384l10 50M351 404l20-20 46-16M356 450l36-22 20 4M374 396l28 38M366 424l24 28M351 438l34 14M380 408l24-2 10 10M384 398l30-8 10-4"/>
   </svg>
   <div class="s-stat"><span class="mg">Magnifier</span><span class="sp w1">100%<i></i></span><span class="rt">Rotation</span><span class="sp w2">0.0<i></i></span><svg class="ck" viewBox="0 0 9 9"><path d="M.5.500h8v8h-8z" fill="#fff" stroke="#555"/><path d="M2 4l2 2.500L7 2" fill="none" stroke="#000" stroke-width="1.400"/></svg><span>Render</span><svg class="gl" viewBox="0 0 12 12"><circle cx="6" cy="6" r="4.500" fill="#aaa" stroke="#333" stroke-width="1.600"/><path d="M6 0v12M0 6h12" stroke="#333"/></svg><span class="ep">EPSG:4269 (OTF)</span><svg class="bb" viewBox="0 0 12 10"><ellipse cx="6" cy="4.500" rx="5.500" ry="4" fill="#777"/><path d="M3 4.500h1.500M5.300 4.500h1.500M7.600 4.500h1.500" stroke="#ddd"/><path d="M7 8l2 2V7z" fill="#777"/></svg></div>
   <div class="s-task"><span class="s-t1">16_...</span><svg class="k1"><use href="#q"/></svg><span class="s-t2">Save</span><svg class="k2"><use href="#bars"/></svg><svg class="k3"><use href="#spk"/></svg><svg class="k4"><use href="#clip"/></svg><span class="pg"><svg><use href="#q"/></svg><svg><use href="#q"/></svg></span><span class="pg2"></span><span class="s-clk">07:58</span><b>PM</b><svg class="k5"><use href="#pow"/></svg><svg class="k6"><use href="#bat"/></svg></div>
   <div class="s-dlg">
    <div class="s-dt"><svg><use href="#close"/></svg></div>
    <div class="s-db">
     <div class="r cb r1"><i></i></div>
     <div class="r r2"><span class="le"></span><span class="bt">Browse</span></div>
     <div class="r fr r3"></div>
     <div class="r4"><div class="cb"><i></i></div><span class="bt"><svg viewBox="0 0 10 10"><circle cx="4.500" cy="4.500" r="4" fill="#8fb2d8"/><path d="M5 5h5v5H5z" fill="#d8b634"/></svg></span></div>
     <div class="s-grp">
      <div class="cb g1"><i></i></div><div class="ln g2"></div><div class="cb g3"><i></i></div><div class="cb off g4"><i></i></div><div class="ln g5"></div><div class="ln g6"></div>
      <div class="s-in"><div class="cb"><i></i></div><div class="cb"><i></i></div></div>
      <div class="ln g7"></div>
     </div>
     <div class="s-btns"><span class="bt">Cancel</span><span class="bt">Help</span></div>
    </div>
   </div>
  </div>
  <div class="vs"><i></i></div>
 </div>
 <div class="ghs"><svg class="qm" viewBox="0 0 10 10"><rect x=".5" y=".5" width="9" height="9" fill="none" stroke="#dfe3ea" stroke-dasharray="3 1.500"/></svg><i></i><svg class="nav" viewBox="0 0 14 14"><path d="M7 0l3 3H8v3h3V4l3 3-3 3V8H8v3h2l-3 3-3-3h2V8H3v2L0 7l3-3v2h3V3H4z" fill="#2a559c"/></svg></div>
 <footer class="gstat"><span class="gb u">px<svg viewBox="0 0 10 6"><path d="M1 1l4 4 4-4" fill="none" stroke="#8f94a0" stroke-width="1.500"/></svg></span><span class="gb z">66.7%</span><span class="gb v"><svg viewBox="0 0 10 6"><path d="M1 1l4 4 4-4" fill="none" stroke="#8f94a0" stroke-width="1.500"/></svg></span><span class="fn">shot-2018-06-27_19-58-25.png (10.1 MB)</span></footer>
</section>

<section class="win dlg vec">
 <header class="title dim"><span class="cap">Save vector layer as...</span><svg class="cl"><use href="#closeoff"/></svg></header>
 <div class="body">
  <div class="row f1"><label>Format</label><div class="combo sunk">ESRI Shapefile<b class="btn"><svg><use href="#tri"/></svg></b></div></div>
  <div class="row f2"><label>File name</label><div class="edit sunk"></div><button>Browse</button></div>
  <div class="row f3"><label>Layer name</label><div class="edit off sunk"></div></div>
  <div class="scroll"><div class="inner"></div><div class="cust"><svg viewBox="0 0 8 12"><path d="M0 0l8 6-8 6z" fill="#333"/></svg><b>Custom Options</b><i></i></div></div>
  <div class="btns"><button class="def gray">OK</button><button>Cancel</button><button>Help</button></div>
 </div>
</section>

<section class="win dlg lay">
 <header class="title"><span class="cap">Save layer as...</span><svg class="cl"><use href="#close"/></svg></header>
 <div class="body">
  <div class="row l1"><label>Look in:</label><div class="combo sunk"><svg class="fo"><use href="#folder"/></svg>/home/carlos/Downloads/...s_blockgroup_shapefiles<b class="btn"><svg><use href="#tri"/></svg></b></div>
   <svg class="n a" viewBox="0 0 16 16"><circle cx="8" cy="8" r="6.600" fill="#a3a09b" stroke="#8c8984"/><path d="M12 8H5M8 4.500L4.500 8 8 11.500" fill="none" stroke="#fff" stroke-width="1.800"/></svg>
   <svg class="n" viewBox="0 0 16 16"><circle cx="8" cy="8" r="6.600" fill="#a3a09b" stroke="#8c8984"/><path d="M4 8h7M8 4.500L11.500 8 8 11.500" fill="none" stroke="#fff" stroke-width="1.800"/></svg>
   <svg class="n" viewBox="0 0 16 16"><circle cx="8" cy="8" r="6.600" fill="#3f9a22" stroke="#22630d"/><path d="M8 12V5M4.500 8L8 4.500 11.500 8" fill="none" stroke="#fff" stroke-width="2"/></svg>
   <svg class="n" viewBox="0 0 16 16"><path d="M1 14.500V6l5-2.500 1 1L13 .8l1.500 1.700v3l-3 9.500z" fill="#e0b263" stroke="#7d5518"/><path d="M3 14l3-6 8-4-3 10.500z" fill="#f0cf8e" stroke="#a67a35"/><path d="M12 8.500v7M8.500 12h7" stroke="#1c7a36" stroke-width="3.400"/><path d="M12 9v6M9 12h6" stroke="#3fc466" stroke-width="2"/></svg>
   <span class="tog"><svg viewBox="0 0 16 16"><rect x="1" y="1" width="14" height="14" rx="2" fill="#fff" stroke="#000" stroke-width="1.300"/><path d="M4.500 4.500h2.500v2.500H4.500zM9 4.500h2.500v2.500H9zM4.500 9h2.500v2.500H4.500zM9 9h2.500v2.500H9z" fill="#000"/></svg></span>
   <svg class="n z" viewBox="0 0 16 16"><rect x="1" y="1" width="14" height="14" rx="2" fill="#fff" stroke="#000" stroke-width="1.300"/><path d="M4 4.500h8M4 6.500h8M4 8.500h8M4 10.500h8" stroke="#111"/></svg>
  </div>
  <div class="panes">
   <div class="side sunk">
    <div><svg viewBox="0 0 16 16"><path d="M.5 1h12v11H.5z" fill="#444"/><path d="M2 2h9v8H2z" fill="#4aa8cc"/><path d="M5 12h5l6-1v2l-6 3-5-1z" fill="#555"/><path d="M12.500 1.500l1.500 9-1.500 0z" fill="#bbb"/></svg>Computer</div>
    <div class="home"><svg viewBox="0 0 24 20"><path d="M1 4V1h8l2 2h12v3H1z" fill="#5b97e4"/><path d="M.5 5h23v14.500H.5z" fill="url(#gSide)" stroke="#5d98e2"/></svg>carlos</div>
   </div>
   <div class="list sunk">
    <div><svg><use href="#folder"/></svg>ACS_2016_5YR_BG_48_TEXAS.gdb</div>
    <div><svg viewBox="0 0 16 16"><path d="M2.500.500h8l3 3v12h-11z" fill="#fcfcfc" stroke="#c4c4c4"/><path d="M10.500.500v3h3" fill="none" stroke="#bbb"/></svg>bexar_county_shapefile_Albers.shp</div>
    <div class="s"><svg viewBox="0 0 16 16"><path d="M2.500.500h8l3 3v12h-11z" fill="#a9a9d4" stroke="#8080b8"/><path d="M10.500.500v3h3" fill="none" stroke="#77a"/></svg><span>bexar_county_shapefile.shp</span></div>
   </div>
  </div>
  <div class="row l3"><label>File <u>n</u>ame:</label><div class="edit sunk">bexar_county_shapefile.shp</div><button class="def"><span><u>S</u>ave</span></button></div>
  <div class="row l4"><label>Files of type:</label><div class="combo sunk">ESRI Shapefile [OGR] (*.shp *.SHP)<b class="btn"><svg><use href="#tri"/></svg></b></div><button>Cancel</button></div>
  <svg class="sg" viewBox="0 0 12 12" stroke-width="1.200"><path d="M0 12L12 0M4 12l8-8M8 12l4-4" stroke="#555"/><path d="M1.500 12L12 1.500M5.500 12L12 5.500M9.500 12L12 9.500" stroke="#fff"/></svg>
 </div>
</section>

<footer class="task">
 <span class="dots"><i></i><i></i><i></i></span>
 <div class="launch">
  <svg viewBox="0 0 28 28"><rect x="1" y="1" width="26" height="26" rx="2" fill="#329a32" stroke="#1f7a2a"/><path d="M14 4l1.500 5 4.500-2-2 4.500 5 2-5 1.500 2 4.500-4.500-2-1.500 5-2-5-4.500 2 2-4.500-5-1.500 5-2-2-4.500 4.500 2z" fill="#e9f6e2"/><path d="M7 20l6-7 9-9-6 12z" fill="#cc3434"/></svg>
  <svg viewBox="0 0 28 28"><rect x="1" y="1" width="26" height="26" rx="2" fill="#86b2dc"/><path d="M1 1h26v8H14l-6 9L1 5z" fill="#4a7cb4"/><path d="M14 27l7-9 6-8v17z" fill="#aacbea"/><circle cx="14" cy="14.500" r="6.500" fill="#4a86d2" stroke="#e4eef8" stroke-width="1.800"/></svg>
  <svg viewBox="0 0 28 28"><circle cx="14" cy="14" r="13.500" fill="url(#gR)"/><text x="8" y="20" class="rr">R</text></svg>
  <svg viewBox="0 0 28 28"><path d="M3 2l2-2h18l2 2 1 15H2z" fill="#eee9dc"/><rect x="5" y="2" width="18" height="14" rx="2" fill="#231f18" stroke="#5a564c"/><path d="M2 18h24l2 8H0z" fill="#d9d5ca"/><path d="M5 20h13l1 3H4z" fill="#222"/></svg>
  <svg viewBox="0 0 28 28"><path d="M1 1h18l8 8v18H1z" fill="#e4e4e4" stroke="#777"/><path d="M19 1h8v8z" fill="#44484c"/><path d="M3 3h15l7 7v15H3z" fill="#f6f6f6"/></svg>
  <svg viewBox="0 0 28 28"><rect x="1" y="1" width="26" height="26" rx="1" fill="#c8c8c8"/><path d="M3 3h22v10H3zM3 15h22v10H3z" fill="#ddd" stroke="#999"/><path d="M10 7h8v3h-8zM10 18h8v3h-8z" fill="#aaa" stroke="#777" stroke-width=".6"/></svg>
  <svg class="wide" viewBox="0 0 30 30"><rect width="30" height="30" rx="3" fill="#37a047"/><path d="M2 28V12C5 5 12 3 14 10l-2 16z" fill="#000"/><ellipse cx="18" cy="16" rx="9.500" ry="11" fill="#f3ea7c"/><circle cx="14" cy="16" r="2.800" fill="#000"/><circle cx="22.500" cy="15" r="2.300" fill="#000"/><path d="M12 22c4 3 9 3 12-1M13 6c2-3 5 0 3 2M19 4c2-2 5 0 3 2" fill="none" stroke="#222" stroke-width="1.300"/></svg>
  <svg viewBox="0 0 28 28"><ellipse cx="11" cy="10.500" rx="9" ry="9.500" fill="#77747e" stroke="#e62aa4" stroke-width="2.400"/><path d="M11 20v8M8 25h6M24 3v14M24 20v3" stroke="#e62aa4" stroke-width="2.400"/><path d="M7 9h2M12 6l2-1M8 14l2-3 1 4M13 11h4" stroke="#222"/></svg>
 </div>
 <div class="tasks"><span class="t1">[shot-201...</span><span class="t2"><svg><use href="#q"/></svg>ACS_201...</span><span class="t3"><svg><use href="#q"/></svg>Save vect...</span><span class="t4 act"><svg><use href="#gimp"/></svg>[shot-2018...</span><span class="t5 act"><svg><use href="#q"/></svg>Save layer ..</span></div>
 <div class="tray"><span class="br"><svg><use href="#bars"/></svg></span><svg class="sk"><use href="#spk"/></svg><svg class="cp"><use href="#clip"/></svg><span class="pager"><span><svg class="qq"><use href="#q"/></svg><svg class="gg"><use href="#gimp"/></svg></span></span><svg class="pager2"><rect width="61" height="31" fill="url(#mesh)"/></svg><span class="clk">07:58</span><b>PM</b><svg class="pw"><use href="#pow"/></svg><svg class="bt2"><use href="#bat"/></svg></div>
</footer>
</main>
</body>
</html>
```
FILE: styles.css
```css
* { box-sizing: border-box; }
body { margin: 0; background: #2f343f; overflow: hidden; }
.sprite { position: absolute; }
svg { display: block; flex: none; }
i { font-style: normal; flex: none; }
u { text-underline-offset: 2px; text-decoration-thickness: 1px; }
ul { list-style: none; margin: 0; padding: 0; }
.desktop { position: relative; width: 1366px; height: 768px; overflow: hidden; font: 12px "DejaVu Sans", sans-serif; color: #111; background: #000; white-space: nowrap; }
.win { position: absolute; overflow: hidden; }

.sunk { background: #fff; border: 1px solid; border-color: #6a6864 #fff #fff #6a6864; box-shadow: inset 1px 1px #000, inset -1px -1px #d4d0c8; }
.btn { background: #d4d0c8; border: 1px solid; border-color: #d4d0c8 #000 #000 #d4d0c8; box-shadow: inset 1px 1px #fff, inset -1px -1px #6a6864; display: flex; align-items: center; justify-content: center; flex: none; }
.btn svg { width: 8px; height: 5px; }
button { font: inherit; color: #111; background: #d4d0c8; border: 1px solid; border-color: #fff #000 #000 #fff; box-shadow: inset -1px -1px #6a6864; padding: 0; width: 75px; height: 25px; border-radius: 0; flex: none; }
button.def { width: 77px; height: 27px; border: 2px solid #000; border-width: 1px 2px 2px 1px; box-shadow: inset 1px 1px #fff, inset -1px -1px #6a6864; }
button.gray { color: #85827d; text-shadow: 1px 1px #fff; padding-top: 1px; }

.title { height: 27px; background: #2f343f; color: #d3dae3; display: flex; align-items: center; font: 14.67px "Noto Sans", sans-serif; position: relative; flex: none; }
.title.dim { color: #757a86; }
.cap { flex: 1; text-align: center; padding-bottom: 1px; }
.title .cl { width: 17px; height: 17px; }
.wb { display: flex; align-items: center; margin-right: 10px; }
.min { width: 8px; height: 3px; background: #d3dae3; }
.mx { width: 8px; height: 8px; margin: 0 21px 0 22px; fill: #d3dae3; }
.dim .min { background: #676b78; }
.dim .mx { fill: #676b78; }

/* main window */
.qgis { left: 0; top: 0; width: 1366px; height: 730px; padding-left: 4px; background: #d4d0c8; box-shadow: inset 4px 0 #2f343f; }
.qgis .title { margin-left: -4px; }
.qgis .cap { margin-right: 10px; }
.menu { height: 20px; padding-left: 7px; display: flex; gap: 13.5px; align-items: center; border-bottom: 1px solid #6a6864; }
.tb { height: 34px; border-top: 1px solid #fff; border-bottom: 1px solid #6a6864; display: flex; align-items: center; padding-left: 3px; }
.tb > svg { width: 31px; height: 24px; }
.tb > .grip + svg { margin-left: 2px; }
.tb > svg.on { width: 30px; height: 29px; padding: 2px 3px; border: 1px solid; border-color: #6a6864 #fff #fff #6a6864; background: #e9e7e2; }
.grip { width: 6px; height: 27px; border: 1px solid; border-color: #fff #6a6864 #6a6864 #fff; background: linear-gradient(90deg, #d4d0c8 1px, #6a6864 1px 2px, #fff 2px 3px, #d4d0c8 3px); }
.tb .sep { width: 2px; height: 33px; background: linear-gradient(90deg, #6a6864 50%, #fff 50%); margin: 0 2px 0 3px; }
.tb svg.ar, .ar { width: 10px; height: 5px; }
.tb > svg.ar { margin: 0 0 0 2px; }
.ar.grey { fill: #8885a0; }
.tbr { display: flex; align-items: center; margin-left: auto; margin-right: 293px; }
.tipi { width: 26px; height: 22px; }
.ttipi { width: 22px; height: 22px; margin: 0 6px 0 9px; }
.tbr .sep { margin: 0 3px 0 3px; }
.helpi { width: 21px; height: 22px; margin-left: 8px; }
.work { display: flex; height: 589px; }
.ltb { width: 47px; border-right: 1px solid #6a6864; border-bottom: 1px solid #6a6864; padding-top: 3px; }
.hgrip { display: block; width: 39px; height: 6px; margin-left: 4px; border: 1px solid; border-color: #fff #6a6864 #6a6864 #fff; background: linear-gradient(#d4d0c8 1px, #6a6864 1px 2px, #fff 2px 3px, #d4d0c8 3px); }
.li { height: 30px; display: flex; align-items: center; padding-left: 5px; }
.hgrip + .li { margin-top: 2px; }
.li svg { width: 24px; height: 24px; }
.li svg.ar { width: 9px; height: 5px; margin-left: 5px; }
.hline { display: block; height: 2px; margin: 1px 0 3px; border-top: 1px solid #6a6864; background: #fff; }
.docks { width: 246px; }
.dock { display: flex; flex-direction: column; }
.dock.browser { height: 423px; }
.dock.layers { height: 166px; border-top: 1px solid #000; }
.dock h2 { margin: 0; font: 12px "DejaVu Sans", sans-serif; height: 20px; display: flex; align-items: center; justify-content: space-between; padding: 0 4px 0 2px; border-top: 1px solid #fff; border-bottom: 1px solid #6a6864; flex: none; }
.dock.layers h2 { height: 20px; padding-top: 1px; }
.dock h2 span { display: flex; gap: 6px; }
.dock h2 svg { width: 9px; height: 9px; margin-bottom: 2px; }
.dtb { height: 26px; border-top: 1px solid #fff; border-right: 1px solid #6a6864; border-bottom: 1px solid #aaa69e; display: flex; align-items: center; padding-left: 5px; gap: 7px; flex: none; }
.dtb svg { width: 16px; height: 16px; }
.dtb svg.ar { width: 9px; height: 5px; margin: 0 1px 0 -2px; }
.tree li { height: 16px; display: flex; align-items: center; padding-left: 23px; gap: 6px; background: repeating-linear-gradient(#888 0 1px, #fff 1px 2px) 10px 0 / 1px 100% no-repeat, repeating-linear-gradient(90deg, #888 0 1px, #fff 1px 2px) 11px 8px / 10px 1px no-repeat; position: relative; }
.tree svg { width: 16px; height: 16px; }
.tree .last { background-size: 1px 9px, 10px 1px; }
.tree .ex::before { content: ""; position: absolute; left: 6px; top: 4px; width: 9px; height: 9px; border: 1px solid #777; background: linear-gradient(#000, #000) 1px 3px / 5px 1px no-repeat, linear-gradient(#000, #000) 3px 1px / 1px 5px no-repeat #fff; }
.browser .tree { height: 373px; width: 245px; margin: 0 0 0 1px; padding: 2px 0; }
.db2 { width: 16px; height: 16px; border-radius: 2px; background: #5b86b8; color: #fff; font-size: 6px; line-height: 15px; text-align: center; }
.ltree { margin: 1px 0 0 1px; width: 245px; flex: 1; padding: 1px 1px 1px 0; display: flex; overflow: hidden; }
.ltree .tree { flex: 1; font-weight: bold; color: #000; overflow: hidden; height: 115px; }
.ltree .tree li { flex: none; }
.tree svg.t { width: 14px; margin: 0 1px; }
.sel div { margin-left: -3px; flex: 1; height: 16px; background: #000080; color: #fff; display: flex; align-items: center; padding-left: 4px; }
.sel svg.chk { width: 12px; height: 12px; margin-right: 6px; }
.sw { width: 16px; height: 15px; background: #5f71ba; border: 1px solid #4658a0; margin-right: 6px; }
.tree .sel { gap: 0; }
.sb { width: 16px; display: flex; flex-direction: column; background: repeating-conic-gradient(#fff 0 25%, #d4d0c8 0 50%) 0 0 / 2px 2px; }
.sb .btn { height: 16px; }
.sb .thumb { height: 24px; }
.sb .end { margin-top: auto; }
.flip { transform: scaleY(-1); }
.canvas { margin-left: 5px; flex: 1; border: 2px solid #000; border-width: 1px 0 1px 2px; border-bottom-color: #fff; background: #869fd9; overflow: hidden; box-shadow: -1px 0 #6a6864; }
.qstat { height: 26px; padding-left: 398px; line-height: 31px; }

/* image editor window */
.gimp { left: 412px; top: 100px; width: 954px; height: 630px; background: #383c4a; border-left: 4px solid #2f343f; border-right: 4px solid #2f343f; border-top: 1px solid #1b1e25; border-bottom: 4px solid #2f343f; }
.gt { height: 48px; align-items: flex-start; border-bottom: 1px solid #22252e; }
.gcap { margin-left: 550.5px; flex: 1; line-height: 25px; letter-spacing: -.1px; }
.gt .wb { height: 26px; margin-right: 6px; }
.grule { display: flex; height: 18px; padding-left: 544px; }
.grule text { font: 11px "DejaVu Sans", sans-serif; fill: #d3dae3; }
.zq { width: 12px; height: 12px; margin: 4px 0 0 3px; }
.gmain { display: flex; height: 512px; padding-left: 544px; }
.shot { position: relative; width: 384px; height: 512px; padding-top: 1px; background: #d4d0c8; overflow: hidden; font: 8px "DejaVu Sans", sans-serif; color: #222; }
.shot::after { content: ""; position: absolute; inset: 0; background: repeating-linear-gradient(90deg, #ff0 0 6px, #000 6px 10px) 0 0 / 100% 1px no-repeat, repeating-linear-gradient(90deg, #ff0 0 6px, #000 6px 10px) 0 100% / 100% 1px no-repeat, repeating-linear-gradient(#ff0 0 6px, #000 6px 10px) 100% 0 / 1px 100% no-repeat; }
.s-title { height: 17px; background: #2f343f; display: flex; align-items: center; justify-content: flex-end; padding-right: 8px; }
.s-title .min { width: 5px; height: 2px; background: #676b78; }
.s-title .mx { width: 5px; height: 5px; fill: #676b78; margin: 0 14px 0 15px; }
.s-title .cl { width: 11px; height: 11px; }
.s-menu { height: 12px; border-bottom: 1px solid #aaa; }
.s-tb { height: 24px; border-top: 1px solid #fff; border-bottom: 1px solid #888; display: flex; align-items: center; padding-left: 111px; }
.s-tb .a { width: 19px; height: 15px; }
.s-tb .b { width: 15px; height: 15px; margin-left: 6px; }
.s-tb .c { width: 6px; height: 4px; margin-left: 3px; }
.s-tb .sep { width: 1px; height: 22px; background: #777; margin: 0 1px 0 3px; }
.s-tb .grip { width: 4px; height: 18px; }
.s-tb .d { width: 14px; height: 15px; margin-left: 5px; }
.s-gap { height: 23px; border-bottom: 1px solid #222; }
.s-map { background: #869fd9; }
.s-stat { height: 18px; border-top: 1px solid #fff; display: flex; align-items: center; padding: 1px 0 0 12px; }
.mg { width: 40px; }
.sp { background: #fff; border: 1px solid #555; height: 13px; line-height: 11px; padding-left: 3px; display: flex; justify-content: space-between; }
.sp i { width: 10px; background: linear-gradient(#333, #333) 4px 2px / 3px 1px no-repeat, linear-gradient(#333, #333) 4px 9px / 3px 1px no-repeat, linear-gradient(#555, #555) 0 5px / 100% 1px no-repeat #d4d0c8; }
.w1 { width: 55px; margin-right: 7px; }
.rt { width: 39px; }
.w2 { width: 54px; margin-right: 6px; }
.ck { width: 8px; height: 8px; margin-right: 4px; }
.gl { width: 11px; height: 11px; margin: 0 2px 0 13px; }
.bb { width: 11px; height: 10px; margin-left: 15px; }
.s-task { height: 24px; background: #2f343f; display: flex; align-items: center; color: #a9afba; font: 10.400px "Noto Sans", sans-serif; }
.s-t1 { width: 38px; height: 22px; line-height: 20px; background: #414554; padding-left: 5px; }
.k1 { width: 11px; height: 14px; margin: 0 2px 0 8px; }
.s-t2 { color: #5294e2; width: 35px; }
.k2 { width: 20px; height: 20px; margin-right: 10px; }
.k3 { width: 22px; height: 22px; margin-right: 5px; }
.k4 { width: 20px; height: 20px; margin-right: 7px; }
.pg { width: 40px; height: 20px; background: linear-gradient(90deg, #333 11px, #2d8cf0 11px 28px, #3c4a58 28px); display: flex; padding: 3px 0 0 14px; gap: 2px; }
.pg svg { width: 11px; height: 14px; }
.pg2 { width: 40px; height: 20px; background: #3b3b3b; margin: 0 6px 0 3px; }
.s-clk { font: 300 19px Lato, sans-serif; color: #c8ccd6; width: 53px; letter-spacing: .3px; }
.s-task b { font: bold 8px "DejaVu Sans Mono", monospace; color: #2f7fdc; width: 11px; }
.k5 { width: 17px; height: 17px; margin: 0 9px 0 6px; }
.k6 { width: 18px; height: 19px; }
.s-dlg { position: absolute; left: 0; top: 14px; width: 117px; height: 441px; background: #2f343f; padding: 0 3px 2px 0; }
.s-dt { height: 18px; display: flex; align-items: center; justify-content: flex-end; padding-right: 2px; }
.s-dt svg { width: 12px; height: 12px; }
.s-db { background: #d4d0c8; height: 421px; padding: 14px 8px 0 0; }
.cb { height: 13px; background: #fff; border: 1px solid #555; border-color: #444 #eee #eee #444; display: flex; justify-content: flex-end; }
.cb i { width: 10px; border: 1px solid #fff; border-right-color: #333; border-bottom-color: #333; background: conic-gradient(from -45deg at 50% 70%, #000 90deg, #d4d0c8 0) 50% 50% / 5px 3px no-repeat #d4d0c8; }
.cb.off { background: #d4d0c8; }
.cb.off i { background: linear-gradient(#777, #777) 3px 2px / 3px 1px no-repeat, linear-gradient(#777, #777) 3px 7px / 3px 1px no-repeat, linear-gradient(#333, #333) 0 4px / 100% 1px no-repeat #d4d0c8; }
.s-db > .r { margin-right: 6px; }
.r2 { display: flex; gap: 5px; margin-top: 5px; align-items: center; }
.le { width: 45px; height: 13px; background: #fff; border: 1px solid #666; border-right-color: #eee; }
.bt { width: 50px; height: 17px; border: 1px solid; border-color: #fff #555 #555 #fff; text-align: center; line-height: 15px; color: #111; }
.fr { height: 14px; border: 1px solid; border-color: #555 #fff #fff #555; margin-top: 4px; }
.r4 { display: flex; margin: 4px 6px 0 0; gap: 2px; }
.r4 .cb { width: 85px; }
.r4 .bt { width: 14px; height: 14px; padding: 1px; }
.s-grp { height: 294px; margin-top: 11px; border: 1px solid; border-color: #555 #fff #fff #555; padding: 7px 7px 0 0; }
.ln { border-top: 1px solid #888; height: 1px; }
.g2 { margin-top: 26px; } .g3 { margin-top: 30px; } .g4 { margin-top: 5px; } .g5 { margin-top: 9px; border-color: #aaa; } .g6 { margin-top: 17px; border-color: #aaa; }
.s-in { margin-top: 17px; height: 116px; border: 1px solid #999; border-bottom-color: #888; padding: 12px 6px 0 0; }
.s-in .cb + .cb { margin-top: 5px; }
.g7 { margin-top: 9px; }
.s-btns { display: flex; justify-content: flex-end; gap: 6px; margin-top: 7px; margin-right: -1px; }
.vs { margin-left: 1px; width: 17px; padding: 3px 0 0 5px; background: #3e4252; }
.vs i { display: block; width: 7px; height: 507px; border-radius: 4px; background: #767b88; }
.ghs { height: 18px; display: flex; align-items: center; padding-left: 4px; }
.ghs .qm { width: 10px; height: 10px; }
.ghs i { width: 905px; height: 6px; border-radius: 3px; background: #767b88; margin: 0 6px 0 7px; }
.nav { width: 13px; height: 14px; }
.gstat { display: flex; align-items: center; padding: 0 0 0 101px; height: 28px; color: #d3dae3; }
.gb { height: 26px; border: 1px solid #2b2e39; border-radius: 2px; background: #444a58; display: flex; align-items: center; }
.gb svg { width: 9px; height: 6px; }
.gb.u { width: 48px; padding: 0 6px 0 5px; justify-content: space-between; margin-right: 3px; }
.gb.z { width: 61px; justify-content: flex-end; padding-right: 6px; background: #404552; margin-right: 1px; }
.gb.v { width: 17px; justify-content: center; }
.fn { font: 13.330px "Noto Sans", sans-serif; letter-spacing: .34px; margin-left: 3px; }

/* dialogs */
.dlg { background: #2f343f; border-top: 1px solid #14161c; }
.dlg .title { height: 26px; }
.dlg .cl { position: absolute; right: 9px; top: 4px; }
.body { background: #d4d0c8; position: relative; overflow: hidden; }
.row { display: flex; align-items: center; }
.combo { height: 21px; display: flex; align-items: center; padding: 0 1px 0 3px; }
.combo .btn { margin-left: auto; width: 16px; height: 17px; }
.edit { height: 21px; display: flex; align-items: center; padding-left: 5px; }
.off { background: #d4d0c8; }
.vec { left: 368px; top: 21px; width: 599px; height: 663px; padding: 0 4px 4px; }
.vec .body { height: 632px; padding: 18px 11px 0; }
.vec .title .cl { right: 5px; }
.vec .cap { padding-right: 30px; }
.vec .row { padding-left: 9px; height: 25px; }
.vec .f1 { margin-bottom: 5px; }
.vec label { width: 79px; }
.vec .f1 .combo { width: 471px; }
.vec .f2 .edit { width: 389px; margin-right: 7px; }
.vec .f3 { margin-top: 5px; }
.vec .f3 .edit { width: 471px; }
.scroll { height: 463px; margin-top: 21px; border: 1px solid; border-color: #6a6864 #fff #fff #6a6864; box-shadow: inset 1px 1px #000; padding-left: 10px; }
.inner { height: 424px; width: 546px; border: 1px solid #6a6864; border-top: 0; box-shadow: inset 1px 0 #fff, 1px 1px #fff; }
.cust { display: flex; align-items: center; height: 31px; padding-left: 5px; color: #444; }
.cust svg { width: 7px; height: 12px; margin-right: 10px; }
.cust b { margin-right: 8px; font-size: 12px; }
.cust i { width: 409px; height: 2px; background: #fff; border-top: 1px solid #6a6864; }
.btns { display: flex; justify-content: flex-end; align-items: center; gap: 8px; margin: 7px 1px 0 0; }
.btns .def { margin-right: -1px; }
.lay { left: 366px; top: 141px; width: 634px; height: 447px; padding: 0 4px 4px 3px; }
.lay .title .cl { right: 5px; }
.lay .cap { padding-right: 28px; }
.lay .body { height: 416px; padding: 9px 11px 0; }
.lay label { width: 83px; }
.l1 { height: 24px; }
.lay .l1 .combo { width: 359px; padding-left: 4px; }
.fo { width: 16px; height: 14px; margin-right: 3px; }
.n { width: 16px; height: 16px; margin-left: 11px; }
.n.a { margin-left: 9px; }
.tog { width: 21px; height: 21px; margin-left: 9px; border: 1px solid; border-color: #6a6864 #fff #fff #6a6864; background: #e9e7e2; padding: 2px; }
.tog svg { width: 17px; height: 17px; }
.n.z { margin-left: 8px; }
.panes { display: flex; gap: 5px; margin-top: 6px; height: 299px; }
.side { width: 92px; padding: 4px 4px; }
.side div { display: flex; align-items: center; gap: 6px; height: 19px; }
.side svg { width: 16px; height: 16px; }
.side .home { height: 30px; }
.side .home svg { width: 24px; height: 20px; }
.list { width: 508px; padding: 2px 1px; }
.list div { height: 16px; display: flex; align-items: center; padding-left: 3px; gap: 6px; }
.list svg { width: 16px; height: 15px; }
.list .s { background: #000080; color: #fff; width: 239px; gap: 2px; }
.list .s span { border: 1px dotted #ffff7f; height: 16px; line-height: 14px; padding-left: 3px; flex: 1; }
.l3 { margin-top: 8px; height: 27px; }
.lay .l3 .edit { width: 438px; margin-right: 7px; }
.lay .l3 .def { margin-top: -2px; }
.l4 { margin-top: 6px; height: 25px; }
.lay .l4 .combo { width: 438px; margin-right: 8px; margin-top: 1px; }
.lay .l4 label { padding-top: 1px; }
.lay .side .home { gap: 5px; }
.sg { position: absolute; right: 0; bottom: 0; width: 12px; height: 12px; }

/* task bar */
.task { position: absolute; left: 0; top: 730px; width: 1366px; height: 38px; background: #2f343f; display: flex; align-items: center; color: #c5cad4; font: 15.200px "Noto Sans", sans-serif; }
.dots { display: flex; gap: 5px; margin: 0 18px 2px 10px; }
.dots i { width: 3px; height: 3px; background: #c5cad4; border-radius: 1px; }
.launch { display: flex; gap: 8px; width: 291px; align-items: center; }
.launch svg { width: 28px; height: 28px; }
.launch svg.wide { width: 30px; height: 30px; margin-right: -2px; }
.rr { font: bold 17px "Liberation Serif", serif; fill: #fff; }
.tasks { display: flex; gap: 3px; align-self: flex-end; height: 35px; }
.tasks span { display: flex; align-items: center; background: #444a58; border: 1px solid #2a2e38; height: 33px; border-radius: 2px; overflow: hidden; padding-bottom: 2px; }
.tasks .act { background: #2d313b; color: #5294e2; border-color: #282c35; }
.tasks svg { width: 16px; height: 20px; }
.tasks .t1 { width: 92px; padding-left: 0; border-left: 0; }
.t2 { width: 121px; padding-left: 8px; } .t2 svg { margin-right: 9px; }
.t3 { width: 121px; padding-left: 8px; } .t3 svg { margin-right: 4px; }
.t4 { width: 121px; padding-left: 6px; } .tasks .t4 svg { width: 19px; height: 19px; margin-right: 1px; }
.t5 { width: 112px; padding-left: 8px; } .t5 svg { margin-right: 2px; }
.tray { display: flex; align-items: center; margin-left: 13px; }
.br { width: 36px; height: 36px; background: #3a3c41; padding: 3px; margin-right: 12px; }
.br svg { width: 30px; height: 30px; }
.sk { width: 34px; height: 34px; margin-right: 5px; }
.cp { width: 32px; height: 32px; margin-right: 8px; }
.pager { width: 61px; height: 31px; background: radial-gradient(ellipse 24px 8px at 50% 0, #8cc6ff, transparent), linear-gradient(#4a4e55, #2c3038); border: 1px solid #555; padding: 5px 0 0 15px; margin-right: 3px; }
.pager > span { display: flex; width: 42px; height: 20px; background: linear-gradient(90deg, #2d90f8 27px, #2572c4 27px); align-items: center; padding-left: 14px; gap: 3px; }
.qq { width: 11px; height: 14px; }
.gg { width: 14px; height: 18px; }
.pager2 { width: 61px; height: 31px; }
.clk { font: 300 29px Lato, sans-serif; letter-spacing: .6px; margin-left: 8px; width: 81px; }
.tray b { font: bold 12px "DejaVu Sans Mono", monospace; color: #2f7fdc; width: 16px; }
.pw { width: 26px; height: 26px; margin: 0 12px 0 6px; }
.bt2 { width: 27px; height: 30px; }
```
